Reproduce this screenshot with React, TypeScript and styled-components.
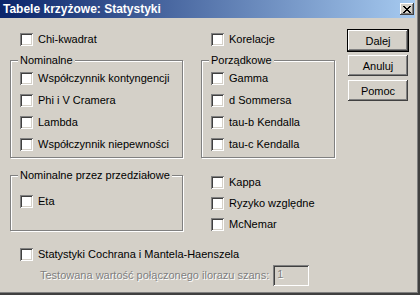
import React from "react";
import styled, { createGlobalStyle } from "styled-components";

const Global = createGlobalStyle`
  html, body { margin: 0; padding: 0; background: #d4d0c8; }
  body { font-family: "Liberation Sans", Arial, sans-serif; font-size: 11px; color: #000; }
  #root { width: 420px; height: 295px; overflow: hidden; }
`;

const Window = styled.div`
  width: 420px;
  height: 295px;
  box-sizing: border-box;
  display: flex;
  flex-direction: column;
  background: #d4d0c8;
  padding: 0 5px 4px 0;
  box-shadow: inset -1px -1px 0 #404040, inset -2px -2px 0 #404040, inset -3px -3px 0 #808080;
`;

const TitleBar = styled.div`
  height: 18px;
  flex: none;
  display: flex;
  align-items: center;
  justify-content: space-between;
  padding: 0 1px 0 3px;
  background: linear-gradient(to right, #0a246a, #a6caf0);
  color: #fff;
  font: bold 12px "Liberation Sans", Arial, sans-serif;
  white-space: nowrap;
`;

const CloseButton = styled.div`
  width: 14px;
  height: 12px;
  box-sizing: border-box;
  display: flex;
  align-items: center;
  justify-content: center;
  background: #d4d0c8;
  box-shadow: inset -1px -1px 0 #404040, inset 1px 1px 0 #fff, inset -2px -2px 0 #808080;
`;

const Client = styled.div`
  flex: 1;
  display: flex;
  gap: 11px;
`;

const Main = styled.div`
  width: 336px;
  box-sizing: border-box;
  padding: 15px 0 0 10px;
  display: flex;
  flex-direction: column;
`;

const Row = styled.div<{ $top?: number }>`
  display: grid;
  grid-template-columns: 173px 134px;
  column-gap: 18px;
  margin-top: ${(p) => p.$top ?? 0}px;
`;

const FullRow = styled.div<{ $top?: number; $indent: number }>`
  display: flex;
  align-items: center;
  gap: 4px;
  margin-top: ${(p) => p.$top ?? 0}px;
  padding-left: ${(p) => p.$indent}px;
`;

const CheckRow = styled.label<{ $indent?: number }>`
  display: flex;
  align-items: center;
  gap: 5px;
  height: 13px;
  line-height: 13px;
  padding-left: ${(p) => p.$indent ?? 0}px;
  white-space: nowrap;
`;

const Box = styled.span`
  flex: none;
  width: 13px;
  height: 13px;
  box-sizing: border-box;
  background: #fff;
  box-shadow: inset 1px 1px 0 #808080, inset -1px -1px 0 #fff, inset 2px 2px 0 #404040,
    inset -2px -2px 0 #d4d0c8;
`;

const Group = styled.div<{ $pt: number; $pb: number }>`
  position: relative;
  border: 1px solid #808080;
  box-shadow: inset 1px 1px 0 #fff, 1px 1px 0 #fff;
  padding: ${(p) => p.$pt}px 0 ${(p) => p.$pb}px 9px;
  display: flex;
  flex-direction: column;
  gap: 9px;
`;

const GroupLabel = styled.span`
  position: absolute;
  top: -7px;
  left: 7px;
  padding: 0 2px;
  line-height: 13px;
  background: #d4d0c8;
  white-space: nowrap;
`;

const List = styled.div<{ $pt: number }>`
  display: flex;
  flex-direction: column;
  gap: 8px;
  padding: ${(p) => p.$pt}px 0 0 10px;
`;

const DisabledText = styled.span`
  color: #808080;
  text-shadow: 1px 1px 0 #fff;
  white-space: nowrap;
  line-height: 13px;
`;

const NumberField = styled.div`
  width: 36px;
  height: 21px;
  box-sizing: border-box;
  padding: 3px 0 0 4px;
  line-height: 13px;
  background: #d4d0c8;
  color: #808080;
  text-shadow: 1px 1px 0 #fff;
  box-shadow: inset 1px 1px 0 #808080, inset -1px -1px 0 #fff, inset 2px 2px 0 #404040,
    inset -2px -2px 0 #d4d0c8;
`;

const Buttons = styled.div`
  display: flex;
  flex-direction: column;
  gap: 2px;
  padding-top: 11px;
`;

const Button = styled.button<{ $default?: boolean }>`
  width: 62px;
  height: 23px;
  box-sizing: border-box;
  margin: 0;
  padding: 0;
  font: 11px "Liberation Sans", Arial, sans-serif;
  color: #000;
  background: #d4d0c8;
  border: 1px solid ${(p) => (p.$default ? "#000" : "transparent")};
  box-shadow: ${(p) =>
    p.$default
      ? "inset -1px -1px 0 #404040, inset 1px 1px 0 #fff, inset -2px -2px 0 #808080"
      : "inset -1px -1px 0 #404040, inset 1px 1px 0 #fff, inset -2px -2px 0 #808080"};
`;

const Check = ({ label, indent }: { label: string; indent?: number }) => (
  <CheckRow $indent={indent}>
    <Box />
    <span>{label}</span>
  </CheckRow>
);

export default function App() {
  return (
    <>
      <Global />
      <Window>
        <TitleBar>
          <span>Tabele krzyżowe: Statystyki</span>
          <CloseButton>
            <svg width="8" height="7" viewBox="0 0 8 7" shapeRendering="crispEdges">
              <path d="M0 0h2v1h-2zM6 0h2v1h-2zM1 1h2v1h-2zM5 1h2v1h-2zM2 2h4v1h-4zM3 3h2v1h-2zM2 4h4v1h-4zM1 5h2v1h-2zM5 5h2v1h-2zM0 6h2v1h-2zM6 6h2v1h-2z" fill="#000" />
            </svg>
          </CloseButton>
        </TitleBar>
        <Client>
          <Main>
            <Row>
              <Check label="Chi-kwadrat" indent={10} />
              <Check label="Korelacje" indent={10} />
            </Row>
            <Row $top={14}>
              <Group $pt={11} $pb={6}>
                <GroupLabel>Nominalne</GroupLabel>
                <Check label="Współczynnik kontyngencji" />
                <Check label="Phi i V Cramera" />
                <Check label="Lambda" />
                <Check label="Współczynnik niepewności" />
              </Group>
              <Group $pt={11} $pb={6}>
                <GroupLabel>Porządkowe</GroupLabel>
                <Check label="Gamma" />
                <Check label="d Sommersa" />
                <Check label="tau-b Kendalla" />
                <Check label="tau-c Kendalla" />
              </Group>
            </Row>
            <Row $top={17}>
              <Group $pt={19} $pb={17}>
                <GroupLabel>Nominalne przez przedziałowe</GroupLabel>
                <Check label="Eta" />
              </Group>
              <List $pt={1}>
                <Check label="Kappa" />
                <Check label="Ryzyko względne" />
                <Check label="McNemar" />
              </List>
            </Row>
            <FullRow $top={17} $indent={10}>
              <Check label="Statystyki Cochrana i Mantela-Haenszela" />
            </FullRow>
            <FullRow $top={4} $indent={30}>
              <DisabledText>Testowana wartość połączonego ilorazu szans:</DisabledText>
              <NumberField>1</NumberField>
            </FullRow>
          </Main>
          <Buttons>
            <Button $default>Dalej</Button>
            <Button>Anuluj</Button>
            <Button>Pomoc</Button>
          </Buttons>
        </Client>
      </Window>
    </>
  );
}
